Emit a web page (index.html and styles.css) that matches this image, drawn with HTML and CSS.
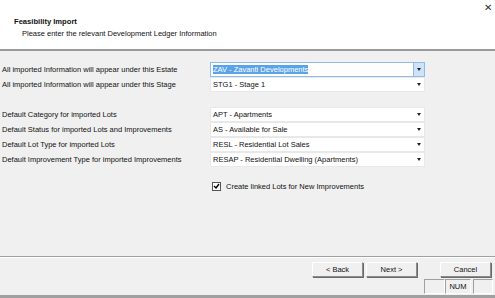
FILE: index.html
```html
<!DOCTYPE html>
<html lang="en">
<head>
    <meta charset="UTF-8">
    <title>Feasibility Import</title>
    <link rel="stylesheet" href="styles.css">
</head>
<body>

<div class="dialog">
    <!-- header -->
    <div class="header">
        <div class="titles">
            <div class="title">Feasibility Import</div>
            <div class="subtitle">Please enter the relevant Development Ledger Information</div>
        </div>
        <div class="close">&#x2715;</div>
    </div>

    <!-- form -->
    <div class="form">
        <div class="group">
            <div class="row">
                <span class="label">All imported Information will appear under this Estate</span>
                <div class="combo focus"><span class="value"><span class="sel">ZAV - Zavanti Developments</span></span><span class="arrow"></span></div>
            </div>
            <div class="row">
                <span class="label">All imported Information will appear under this Stage</span>
                <div class="combo"><span class="value">STG1 - Stage 1</span><span class="arrow"></span></div>
            </div>
        </div>

        <div class="group">
            <div class="row">
                <span class="label">Default Category for imported Lots</span>
                <div class="combo"><span class="value">APT - Apartments</span><span class="arrow"></span></div>
            </div>
            <div class="row">
                <span class="label">Default Status for imported Lots and Improvements</span>
                <div class="combo"><span class="value">AS - Available for Sale</span><span class="arrow"></span></div>
            </div>
            <div class="row">
                <span class="label">Default Lot Type for imported Lots</span>
                <div class="combo"><span class="value">RESL - Residential Lot Sales</span><span class="arrow"></span></div>
            </div>
            <div class="row">
                <span class="label">Default Improvement Type for imported Improvements</span>
                <div class="combo"><span class="value">RESAP - Residential Dwelling (Apartments)</span><span class="arrow"></span></div>
            </div>
        </div>

        <div class="check-row">
            <span class="checkbox">
                <svg width="7" height="7" viewBox="0 0 7 7"><path d="M1 3 L3 5 L6 1" fill="none" stroke="#000" stroke-width="1.4"/></svg>
            </span>
            <span class="check-label">Create linked Lots for New Improvements</span>
        </div>
    </div>

    <!-- buttons -->
    <div class="footer">
        <div class="buttons">
            <button class="btn">&lt; Back</button>
            <button class="btn">Next &gt;</button>
            <button class="btn cancel">Cancel</button>
        </div>
        <div class="status">
            <span class="panel p1"></span>
            <span class="panel p2">NUM</span>
            <span class="panel p3"></span>
        </div>
    </div>
</div>

</body>
</html>
```

FILE: styles.css
```css
body {
    margin: 0;
    padding: 0;
    font-family: 'Liberation Sans', Arial, sans-serif;
    font-size: 7.5px;
    color: #111;
    background: #f0f0f0;
}

.dialog {
    width: 495px;
    height: 298px;
    display: flex;
    flex-direction: column;
    background: #f0f0f0;
}

/* 헤더 */
.header {
    height: 49px;
    flex-shrink: 0;
    background: #fff;
    border-bottom: 2px solid #9a9a9a;
    display: flex;
    justify-content: space-between;
}

.titles {
    padding: 17px 0 0 14px;
}

.title {
    font-weight: bold;
    font-size: 7.6px;
    line-height: 10px;
}

.subtitle {
    padding-left: 8px;
    margin-top: 2px;
    line-height: 10px;
}

.close {
    font-size: 10px;
    color: #333;
    padding: 2px 3px 0 0;
}

/* 폼 */
.form {
    padding: 11px 0 0 2px;
    height: 206px;
    flex-shrink: 0;
    box-sizing: border-box;
    border-bottom: 1px solid #a0a0a0;
}

.group {
    margin-bottom: 15px;
}

.row {
    display: flex;
    align-items: center;
    height: 15px;
}

.label {
    width: 208px;
}

.combo {
    width: 215px;
    height: 15px;
    box-sizing: border-box;
    background: #fff;
    border: 1px solid #e8e8e8;
    display: flex;
    align-items: center;
    justify-content: space-between;
}

.value {
    padding-left: 2px;
}

.sel {
    background: #5aa3ea;
    color: #fff;
}

.arrow {
    width: 10px;
    height: 13px;
    display: flex;
    align-items: center;
    justify-content: center;
}

.arrow::after {
    content: "";
    border-left: 2.5px solid transparent;
    border-right: 2.5px solid transparent;
    border-top: 3px solid #222;
}

.combo.focus {
    border-color: #8fbcea;
}

.combo.focus .arrow {
    background: #cfe3f8;
    border-left: 1px solid #8fbcea;
}

.check-row {
    display: flex;
    align-items: center;
    margin: 4px 0 0 210px;
}

.checkbox {
    width: 7px;
    height: 7px;
    border: 1px solid #555;
    background: #fff;
    display: flex;
    margin-right: 5px;
}

/* 하단 */
.footer {
    flex: 1;
    border-top: 1px solid #fff;
    border-bottom: 3px solid #a0a0a0;
    display: flex;
    flex-direction: column;
}

.buttons {
    display: flex;
    justify-content: flex-end;
    padding: 4px 4px 0 0;
    gap: 3px;
}

.btn {
    width: 51px;
    height: 15px;
    padding: 0;
    font-family: inherit;
    font-size: 7.5px;
    color: #111;
    background: #f0f0f0;
    border: 1px solid;
    border-color: #fff #8a8a8a #8a8a8a #fff;
    box-shadow: 1px 1px 0 #6a6a6a;
}

.btn.cancel {
    margin-left: 20px;
}

.status {
    display: flex;
    justify-content: flex-end;
    margin-top: 2px;
    padding-right: 2px;
}

.panel {
    height: 15px;
    box-sizing: border-box;
    border: 1px solid;
    border-color: #a0a0a0 #fff #fff #a0a0a0;
    display: flex;
    align-items: center;
    justify-content: center;
}

.p1 { width: 21px; }
.p2 { width: 26px; margin-right: 2px; }
.p3 { width: 20px; }
```
